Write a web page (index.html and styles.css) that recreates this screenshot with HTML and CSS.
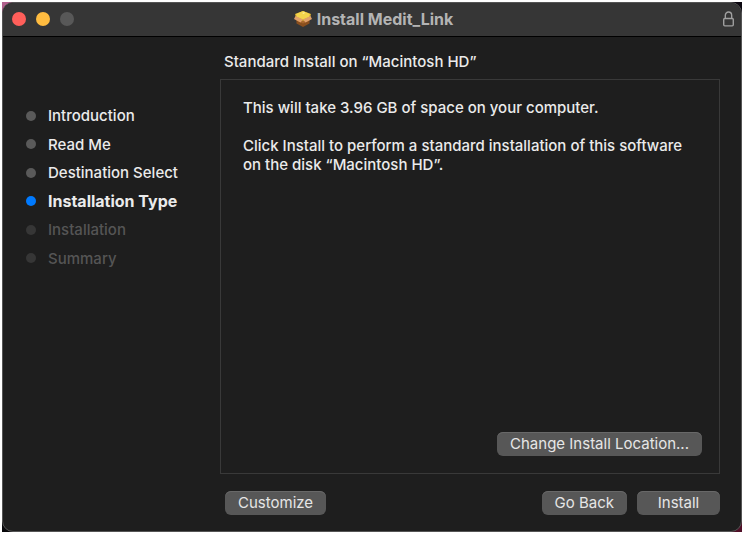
FILE: index.html
```html
<!DOCTYPE html>
<html lang="en">
<head>
  <meta charset="UTF-8">
  <meta name="viewport" content="width=device-width, initial-scale=1.0">
  <title>Install Medit_Link</title>
  <link rel="stylesheet" href="styles.css">
</head>
<body>
  <div class="desktop">
    <div class="window">
      <header class="titlebar">
        <div class="lights">
          <button class="light close" aria-label="Close"></button>
          <button class="light minimize" aria-label="Minimize"></button>
          <button class="light zoom" aria-label="Zoom" disabled></button>
        </div>
        <h1 class="title">
          <svg class="package" viewBox="0 0 18 18" aria-hidden="true">
            <path fill="#8a4f1e" d="M2.500 7L9 11l6.500-4v6.500L9 17l-6.500-3.500z"/>
            <path fill="#a8672c" d="M2.500 7L9 11v2.500l-6.500-3zM15.500 7L9 11v2.500l6.500-3z"/>
            <path fill="#d9ae2e" d="M1 4l8-3 8 3-1 4-7 3-7-3z"/>
            <path fill="#f3d44c" d="M2 4l7-3 7 3-1 3-6 2.500L3 7z"/>
            <path fill="#fff0a0" d="M8 3l3-1-1 2z"/>
            <path fill="#e0a06a" d="M1.500 6L9 9.500l-2.500 3L0 9zM16.500 6L9 9.500l2.500 3L18 9z"/>
          </svg>
          Install Medit_Link
        </h1>
        <svg class="lock" viewBox="0 0 12 16" aria-hidden="true">
          <rect x="1.500" y="7" width="9" height="7" rx="1"/>
          <path d="M3 7V4.200a3 3.200 0 0 1 6 0V7"/>
        </svg>
      </header>
      <div class="content">
        <nav class="sidebar">
          <ol class="steps">
            <li class="step">Introduction</li>
            <li class="step">Read Me</li>
            <li class="step">Destination Select</li>
            <li class="step current" aria-current="step">Installation Type</li>
            <li class="step pending">Installation</li>
            <li class="step pending">Summary</li>
          </ol>
        </nav>
        <main class="main">
          <h2 class="heading">Standard Install on “Macintosh HD”</h2>
          <section class="panel">
            <p>This will take 3.96 GB of space on your computer.</p>
            <p>Click Install to perform a standard installation of this software on the disk “Macintosh HD”.</p>
            <button class="btn location">Change Install Location...</button>
          </section>
          <footer class="actions">
            <button class="btn customize">Customize</button>
            <button class="btn">Go Back</button>
            <button class="btn install">Install</button>
          </footer>
        </main>
      </div>
    </div>
  </div>
</body>
</html>
```
FILE: styles.css
```css
* {
  box-sizing: border-box;
}
body {
  margin: 0;
  background: #fff;
  color: #ebebeb;
  font-family: Inter, "Liberation Sans", sans-serif;
  font-size: 15px;
  font-weight: 500;
  line-height: 19px;
}
.desktop {
  height: 100vh;
  padding: 2px 3px 2px 2px;
  background:
    linear-gradient(90deg, #b0608c 12px, #16395a 40px, #101018 90px, #0c0810) top / 100% 50% no-repeat content-box,
    linear-gradient(90deg, #08080a, #501028) bottom / 100% 50% no-repeat content-box;
}
.window {
  display: flex;
  flex-direction: column;
  height: 100%;
  border: 1px solid #555;
  border-radius: 11px;
  background: #1e1e1e;
  overflow: hidden;
}
.titlebar {
  display: grid;
  grid-template-columns: 1fr auto 1fr;
  align-items: center;
  height: 34px;
  padding: 0 6px 1px 9px;
  background: #363636;
  border-bottom: 1px solid #000;
}
.lights {
  display: flex;
  gap: 10px;
}
.light {
  width: 14px;
  height: 14px;
  padding: 0;
  border: 0;
  border-radius: 50%;
}
.close {
  background: #ff5f5a;
}
.minimize {
  background: #ffbc40;
}
.zoom {
  background: #585858;
}
.title {
  display: flex;
  align-items: center;
  gap: 5px;
  margin: 0;
  color: #b4b4b4;
  font-size: 16px;
  font-weight: 700;
}
.package {
  width: 18px;
  height: 18px;
}
.lock {
  justify-self: end;
  width: 13px;
  height: 17px;
  fill: none;
  stroke: #a0a0a0;
  stroke-width: 1.3;
}
.content {
  display: flex;
  flex: 1;
}
.sidebar {
  width: 217px;
  padding: 69px 0 0 23px;
}
.steps {
  display: flex;
  flex-direction: column;
  justify-content: space-between;
  height: 162px;
  margin: 0;
  padding: 0;
  list-style: none;
}
.step {
  display: flex;
  align-items: center;
  gap: 12px;
}
.step::before {
  content: "";
  width: 10px;
  height: 10px;
  border-radius: 50%;
  background: #5a5a5a;
}
.current {
  font-size: 16px;
  font-weight: 700;
}
.current::before {
  background: #007aff;
}
.pending {
  color: #555;
}
.pending::before {
  background: #363636;
}
.main {
  display: flex;
  flex: 1;
  flex-direction: column;
  padding: 15px 21px 16px 0;
}
.heading {
  margin: 0 0 8px 4px;
  font-size: 15px;
  font-weight: 500;
}
.panel {
  display: flex;
  flex: 1;
  flex-direction: column;
  padding: 18px 17px 17px 22px;
  border: 1px solid #393939;
}
.panel p {
  margin: 0 16px 19px 0;
}
.btn {
  height: 24px;
  padding: 0 13px 2px;
  border: 0;
  border-radius: 6px;
  background: #575757;
  box-shadow: inset 0 1px #686868;
  color: #e6e6e6;
  font: inherit;
  font-weight: 400;
}
.location {
  align-self: flex-end;
  margin-top: auto;
}
.actions {
  display: flex;
  gap: 10px;
  padding: 17px 0 0 5px;
}
.customize {
  margin-right: auto;
}
.install {
  width: 83px;
}
```
